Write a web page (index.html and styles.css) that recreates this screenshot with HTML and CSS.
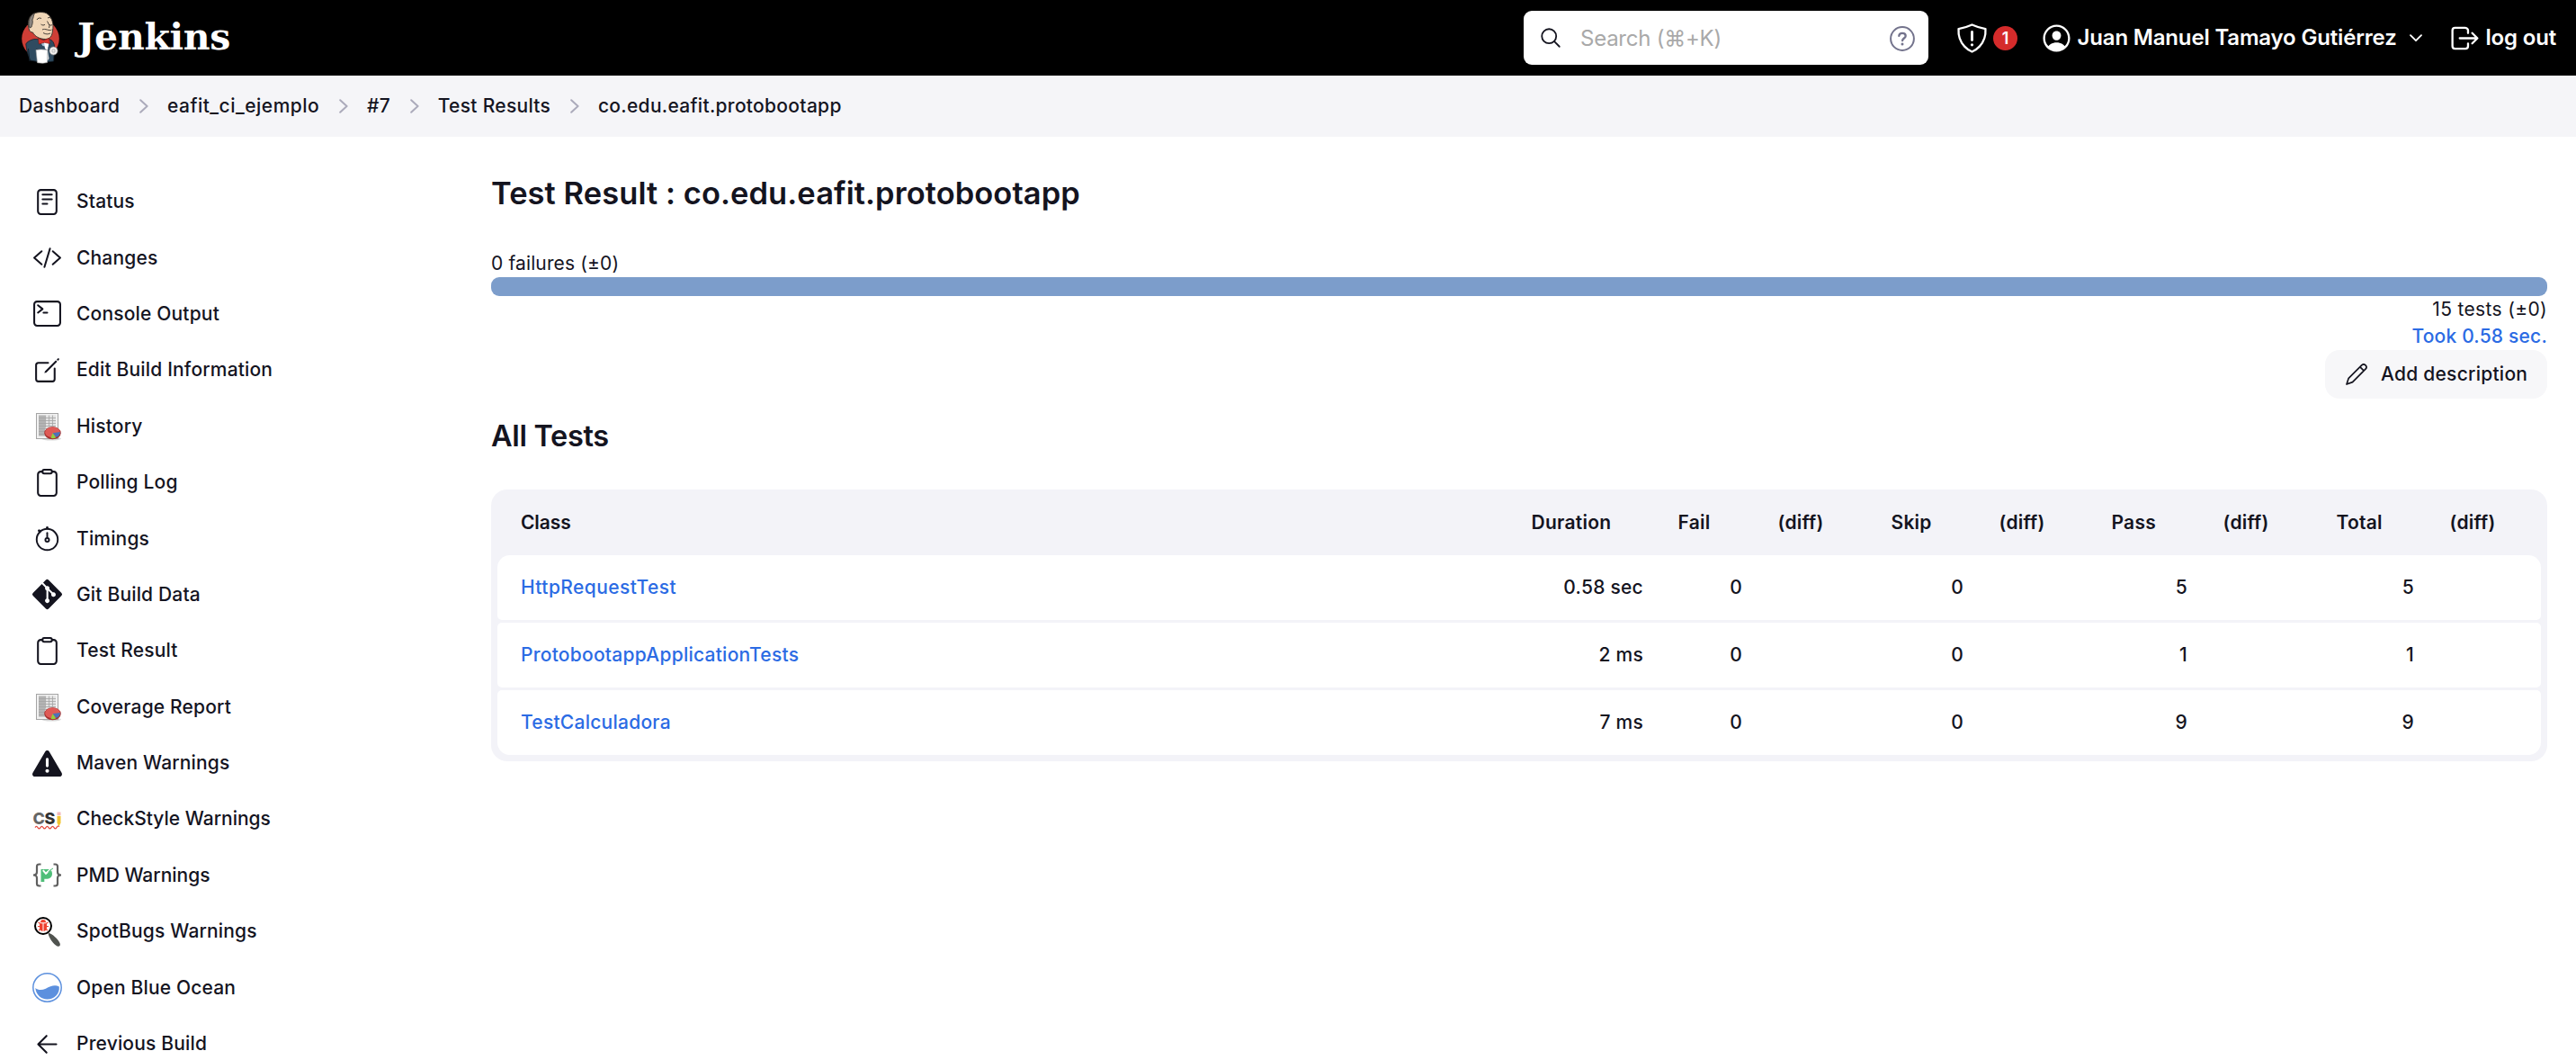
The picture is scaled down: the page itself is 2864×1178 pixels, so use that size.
FILE: index.html
```html
<!DOCTYPE html>
<html lang="en">
<head>
<meta charset="utf-8">
<title>Test Result : co.edu.eafit.protobootapp - Jenkins</title>
<link rel="stylesheet" href="styles.css">
</head>
<body>
<svg class="sprite" aria-hidden="true">
  <symbol id="chevron" viewBox="0 0 10 16"><path d="M1.2 1.2 8.6 8l-7.4 6.8" fill="none" stroke="#abaabb" stroke-width="2" stroke-linecap="round" stroke-linejoin="round"/></symbol>
  <symbol id="clipboard" viewBox="0 0 512 512"><g fill="none" stroke="currentColor" stroke-width="32" stroke-linejoin="round"><path d="M336 64h32a48 48 0 0148 48v320a48 48 0 01-48 48H144a48 48 0 01-48-48V112a48 48 0 0148-48h32"/><rect x="176" y="32" width="160" height="64" rx="26"/></g></symbol>
  <symbol id="report" viewBox="0 0 33 33">
    <ellipse cx="21" cy="30.500" rx="11" ry="2" fill="#d9d9d9"/>
    <rect x="4.500" y="2.500" width="24" height="28" fill="#f1f1f1" stroke="#a5a5a5"/>
    <rect x="7" y="4.500" width="19" height="23" fill="#e2e2e2"/>
    <rect x="7" y="4.500" width="7" height="23" fill="#b4b4b4"/>
    <path d="M7 7.500h19M7 10.500h19M7 13.500h19M7 16.500h19M7 19.500h12M7 22.500h8M7 25.500h8M14.500 4.500v14M18.500 4.500v13M22.500 4.500v12" stroke="#a3a3a3" stroke-width=".8" fill="none"/>
    <ellipse cx="22.500" cy="24.200" rx="9.200" ry="7" fill="#a52e2c"/>
    <ellipse cx="22.500" cy="23.400" rx="8.400" ry="5.900" fill="#df5a56"/>
    <path d="M22.500 24.200l8.300-1.300c.3 3-1.500 4.800-4.200 6z" fill="#4b72b8"/>
    <path d="M22.500 24.200l3.700 5.300c-2 .8-4.200.8-5.700.3z" fill="#8fd03f"/>
  </symbol>
</svg>

<header class="header">
  <a class="brand" href="#">
    <svg class="mascot" viewBox="0 0 60 72">
      <circle cx="29" cy="37" r="20.800" fill="#cf3e36"/>
      <path d="M12.800 43c1-2.500 5-4.500 9-5.500l18 .5c3 1 4.500 4 4.800 8l-1 16-12 1.500-14-2.500c-2-5-4.500-12-4.800-18z" fill="#2f4b60" stroke="#14222d" stroke-width=".8"/>
      <path d="M17 62l-1.500-14M24 49l14 1" stroke="#14222d" stroke-width="1" fill="none"/>
      <path d="M27.500 39h12l-2 7-6-1z" fill="#a9c6da"/><path d="M33 41h5l-1 9-3-2z" fill="#fff"/>
      <path d="M16.500 27c-2-5-1.500-13 3-16.500 4-3.500 14-4.200 18-.5 4.500 4 6.500 11 5 18-.5 6-3 9.500-8 9.500-6 0-12-3-14-7.500-2 0-3.500-1-4-3z" fill="#f0d6b7" stroke="#35302b" stroke-width=".9"/>
      <path d="M17 25c-2.500-6-.5-13.500 5.500-16.500-1.500 3-1 5-2.500 7.500 1 3-.5 6-1 8z" fill="#8b8580" stroke="#35302b" stroke-width=".8"/>
      <path d="M25 16c1-2 3-2.500 5-1.500M37 14c1.500-1 3-.5 3.500.5M29.500 21c1.500 1.300 3.500 1.300 4.500.2M39 21.500c1 .8 2 .8 3 0M36.500 17.500l2.500 5-.5 2.500M31 27c3-2 8 2 10.500 0M32 30.500c3 2 6 1.500 8 .5" stroke="#35302b" stroke-width=".9" fill="none"/>
      <path d="M26.500 36.500l6 2.200 6-2.200 1 6-6-1.200-6.300 1.700z" fill="#d8352e" stroke="#7a1612" stroke-width=".6"/>
      <circle cx="43.500" cy="50.500" r="4.600" fill="#f3f1f0" stroke="#777" stroke-width=".7"/><path d="M42 49h3v3h-3z" fill="none" stroke="#999" stroke-width=".6"/>
      <path d="M24 49.500c4-1 9-.5 13 0l-.5 14-5 .8-6-.6z" fill="#fff" stroke="#aaa" stroke-width=".6"/><path d="M37 51l1.500 8-2 3z" fill="#ddd"/>
    </svg>
    <span class="wordmark">Jenkins</span>
  </a>
  <div class="search">
    <svg class="search-icon" viewBox="0 0 512 512"><g fill="none" stroke="#14141f" stroke-width="36" stroke-linecap="round"><circle cx="221" cy="221" r="157"/><path d="M338 338l110 110"/></g></svg>
    <span class="placeholder">Search (⌘+K)</span>
    <svg class="help-icon" viewBox="0 0 28 28"><circle cx="14" cy="14" r="12.900" fill="none" stroke="#73738c" stroke-width="2"/><path d="M10.300 10.800c.2-1.800 1.700-2.900 3.700-2.900 2.100 0 3.700 1.200 3.700 3 0 2.500-3.600 2.700-3.600 5.300" fill="none" stroke="#73738c" stroke-width="2.300" stroke-linecap="round"/><circle cx="14" cy="20" r="1.500" fill="#73738c"/></svg>
  </div>
  <a class="security" href="#">
    <svg class="hicon" viewBox="0 0 512 512"><path d="M463.100 112.370C373.680 96.330 336.710 84.450 256 48c-80.710 36.450-117.680 48.330-207.100 64.370C32.700 369.130 240.580 457.790 256 464c15.420-6.210 223.300-94.870 207.100-351.630z" fill="none" stroke="#fff" stroke-width="32" stroke-linejoin="round"/><path d="M256 160v125" stroke="#fff" stroke-width="40" stroke-linecap="round"/><circle cx="256" cy="357" r="22" fill="#fff"/></svg>
    <span class="badge">1</span>
  </a>
  <a class="user" href="#">
    <svg class="hicon" viewBox="0 0 512 512"><path fill="#fff" d="M258.900 48C141.920 46.420 46.420 141.920 48 258.900c1.560 112.190 92.910 203.540 205.100 205.100 117 1.600 212.480-93.900 210.880-210.880C462.440 140.910 371.090 49.560 258.900 48zM385.320 375.250a4 4 0 01-6.140-.32 124.270 124.270 0 00-32.350-29.590C321.370 329 289.110 320 256 320s-65.370 9-90.830 25.340a124.240 124.240 0 00-32.350 29.580 4 4 0 01-6.140.32A175.320 175.320 0 0180 259c-1.630-97.310 78.220-178.760 175.570-179S432 158.810 432 256a175.320 175.320 0 01-46.680 119.250z"/><path fill="#fff" d="M256 144c-19.720 0-37.550 7.390-50.220 20.820s-19 32-17.570 51.930C191.110 256 221.520 288 256 288s64.830-32 67.790-71.240c1.480-19.740-4.800-38.140-17.680-51.820C293.390 151.440 275.590 144 256 144z"/></svg>
    <span class="hname">Juan Manuel Tamayo Gutiérrez</span>
    <svg class="caret" viewBox="0 0 14 9"><path d="M1 1.200l6 6 6-6" fill="none" stroke="#fff" stroke-width="1.800" stroke-linecap="round" stroke-linejoin="round"/></svg>
  </a>
  <a class="logout" href="#">
    <svg class="hicon" viewBox="0 0 512 512"><path d="M304 336v40a40 40 0 01-40 40H104a40 40 0 01-40-40V136a40 40 0 0140-40h152c22.090 0 48 17.910 48 40v40M368 336l80-80-80-80M176 256h256" fill="none" stroke="#fff" stroke-width="32" stroke-linecap="round" stroke-linejoin="round"/></svg>
    <span class="hname">log out</span>
  </a>
</header>

<nav class="crumbs">
  <a href="#">Dashboard</a><svg><use href="#chevron"/></svg>
  <a href="#" class="wide">eafit_ci_ejemplo</a><svg><use href="#chevron"/></svg>
  <a href="#">#7</a><svg><use href="#chevron"/></svg>
  <a href="#">Test Results</a><svg><use href="#chevron"/></svg>
  <a href="#">co.edu.eafit.protobootapp</a>
</nav>

<div class="page">
  <aside class="side">
    <a href="#"><svg viewBox="0 0 512 512"><g fill="none" stroke="currentColor" stroke-width="32" stroke-linecap="round" stroke-linejoin="round"><rect x="96" y="48" width="320" height="416" rx="48"/><path d="M176 128h160M176 208h160M176 288h80"/></g></svg>Status</a>
    <a href="#"><svg viewBox="0 0 512 512"><path d="M160 368L32 256l128-112M352 368l128-112-128-112M304 96l-96 320" fill="none" stroke="currentColor" stroke-width="32" stroke-linecap="round" stroke-linejoin="round"/></svg>Changes</a>
    <a href="#"><svg viewBox="0 0 512 512"><g fill="none" stroke="currentColor" stroke-width="32" stroke-linecap="round" stroke-linejoin="round"><rect x="32" y="48" width="448" height="416" rx="48"/><path d="M96 112l80 64-80 64M192 240h64"/></g></svg>Console Output</a>
    <a href="#"><svg viewBox="0 0 512 512"><path d="M384 224v184a40 40 0 01-40 40H104a40 40 0 01-40-40V168a40 40 0 0140-40h167.480" fill="none" stroke="currentColor" stroke-width="32" stroke-linecap="round" stroke-linejoin="round"/><path fill="currentColor" d="M459.940 53.250a16.060 16.060 0 00-23.220-.56L424.350 65a8 8 0 000 11.310l11.340 11.320a8 8 0 0011.340 0l12.060-12c6.100-6.090 6.670-16.010.85-22.380zM399.340 90L218.820 270.200a9 9 0 00-2.310 3.930L208.160 299a3.910 3.910 0 004.860 4.860l24.850-8.350a9 9 0 003.930-2.310L422 112.660a9 9 0 000-12.660l-9.950-10a9 9 0 00-12.710 0z"/></svg>Edit Build Information</a>
    <a href="#"><svg><use href="#report"/></svg>History</a>
    <a href="#"><svg><use href="#clipboard"/></svg>Polling Log</a>
    <a href="#"><svg viewBox="0 0 512 512"><g fill="none" stroke="currentColor" stroke-width="30" stroke-linecap="round"><circle cx="256" cy="272" r="182"/><circle cx="256" cy="280" r="32"/><path d="M256 240v-80"/><path d="M256 78V68M128 134l-12-12" stroke-width="44"/></g></svg>Timings</a>
    <a href="#"><svg viewBox="0 32 448 448"><path fill="currentColor" d="M439.550 236.050L244 40.450a28.870 28.870 0 0 0-40.810 0l-40.660 40.630 51.520 51.520c27.060-9.140 52.680 16.770 43.390 43.680l49.660 49.660c34.230-11.800 61.180 31 35.470 56.690-26.490 26.490-70.210-2.870-56-37.340L240.220 199v121.850c25.300 12.540 22.260 41.850 9.080 55a34.340 34.340 0 0 1-48.550 0c-17.570-17.600-11.070-46.910 11.250-56v-123c-20.800-8.510-24.600-30.740-18.640-45L142.570 101 8.450 235.140a28.860 28.860 0 0 0 0 40.810l195.610 195.600a28.860 28.860 0 0 0 40.800 0l194.690-194.690a28.860 28.860 0 0 0 0-40.810z"/></svg>Git Build Data</a>
    <a href="#"><svg><use href="#clipboard"/></svg>Test Result</a>
    <a href="#"><svg><use href="#report"/></svg>Coverage Report</a>
    <a href="#"><svg viewBox="0 0 512 512"><path fill="currentColor" d="M256 32c14.200 0 27.300 7.500 34.500 19.800l216 368c7.300 12.400 7.300 27.700.2 40.100S486.300 480 472 480H40c-14.300 0-27.600-7.700-34.700-20.100s-7-27.800.2-40.100l216-368C228.700 39.500 241.800 32 256 32zm0 128c-13.300 0-24 10.700-24 24V296c0 13.300 10.700 24 24 24s24-10.700 24-24V184c0-13.300-10.700-24-24-24zm32 224a32 32 0 1 0-64 0 32 32 0 1 0 64 0z"/></svg>Maven Warnings</a>
    <a href="#" class="tight"><svg viewBox="0 0 33 33"><text class="cs" x=".5" y="22"><tspan fill="#666">C</tspan><tspan fill="#303030">S</tspan></text><rect x="27.500" y="8.500" width="4" height="3.500" fill="#f2b8ba"/><path d="M27.500 12.700h4v7.800l-2 4-2-4z" fill="#f2c431"/><path d="M3 25.600q1.500-2.500 3 0t3 0 3 0 3 0 3 0 3 0 3 0 3 0 3-1" fill="none" stroke="#e5473a" stroke-width="1.100"/></svg>CheckStyle Warnings</a>
    <a href="#" class="tight"><svg viewBox="0 0 33 33"><path d="M9.500 4.500H7.500Q5 4.500 5 7v6q0 3.500-4 3.500 4 0 4 3.500v6q0 2.500 2.500 2.500h2M23.500 4.500h2Q28 4.500 28 7v6q0 3.500 4 3.500-4 0-4 3.500v6q0 2.500-2.500 2.500h-2" fill="none" stroke="#606060" stroke-width="2.200"/><path d="M9.500 10h7c4 0 5.500 2 5.500 5 0 3.800-2.500 5.800-7 5.800h-1.700V24H9.500z" fill="#4fbe79"/><path d="M11.800 11.200l3.200 3.600 4.800-4.300" fill="none" stroke="#fff" stroke-width="2"/><path d="M17.500 13.500q2-2.800 5.500-4.500" fill="none" stroke="#4fbe79" stroke-width="1"/></svg>PMD Warnings</a>
    <a href="#"><svg viewBox="0 0 33 33"><path d="M17.500 17.500c5 1.500 11 7 13 11.500 1.500 3.500-1.500 5-4.500 2.500C22 28.500 18 22.500 17.500 17.500z" fill="#50534f"/><circle cx="12" cy="10" r="9" fill="#fff" stroke="#000" stroke-width="2"/><path d="M6.500 6l2.500 1.500M6 10.500h3M7 15l2-1.500M17.500 6L15 7.500M18 10.500h-3M17 15l-2-1.500" stroke="#ee3f2e" stroke-width="1.200"/><path d="M9 6.300a3 3.200 0 016 0z" fill="#ee3f2e"/><path d="M8 7.300h3.500v8.600c-2.200-.3-3.500-2-3.500-4zM12.500 7.300H16v4.600c0 2-1.300 3.700-3.500 4z" fill="#ee3f2e"/></svg>SpotBugs Warnings</a>
    <a href="#"><svg viewBox="0 0 33 33"><circle cx="16.500" cy="16.500" r="15.700" fill="#fff" stroke="#5c90de" stroke-width="1.500"/><path d="M3.300 17c3 2.500 7 2.800 11.500.8 5.500-2.800 10-4.800 15-2.300.8 8-5.500 14-13.300 14-7 0-12.500-5.500-13.200-12.500z" fill="#5c90de"/></svg>Open Blue Ocean</a>
    <a href="#"><svg viewBox="0 0 512 512"><path d="M244 400L100 256l144-144M120 256h292" fill="none" stroke="currentColor" stroke-width="32" stroke-linecap="round" stroke-linejoin="round"/></svg>Previous Build</a>
  </aside>

  <main class="main">
    <h1>Test Result : co.edu.eafit.protobootapp</h1>
    <div class="failures">0 failures (±0)</div>
    <div class="bar"></div>
    <div class="summary">
      <div class="tests">15 tests (±0)</div>
      <a class="took" href="#">Took 0.58 sec.</a>
      <a class="button" href="#"><svg viewBox="0 0 24 24"><path d="M1 23l2.200-6.700L17.700 1.900a3 3 0 014.300 4.300L7.600 20.600zM16 3.800l4 4" fill="none" stroke="#14141f" stroke-width="1.700" stroke-linejoin="round"/></svg>Add description</a>
    </div>
    <h2>All Tests</h2>
    <div class="table-wrap">
      <table>
        <colgroup><col class="c1"><col class="c2"><col class="c3"><col class="c4"><col class="c5"><col class="c6"><col class="c7"><col class="c8"><col class="c9"><col class="c10"></colgroup>
        <thead><tr><th>Class</th><th>Duration</th><th>Fail</th><th>(diff)</th><th>Skip</th><th>(diff)</th><th>Pass</th><th>(diff)</th><th>Total</th><th>(diff)</th></tr></thead>
        <tbody>
          <tr><td><a class="wide" href="#">HttpRequestTest</a></td><td>0.58 sec</td><td>0</td><td></td><td>0</td><td></td><td>5</td><td></td><td>5</td><td></td></tr>
          <tr><td><a href="#">ProtobootappApplicationTests</a></td><td>2 ms</td><td>0</td><td></td><td>0</td><td></td><td>1</td><td></td><td>1</td><td></td></tr>
          <tr><td><a href="#">TestCalculadora</a></td><td>7 ms</td><td>0</td><td></td><td>0</td><td></td><td>9</td><td></td><td>9</td><td></td></tr>
        </tbody>
      </table>
    </div>
  </main>
</div>
</body>
</html>
```
FILE: styles.css
```css
* { box-sizing: border-box; }
body {
  margin: 0;
  height: 1178px;
  overflow: hidden;
  background: #fff;
  color: #14141f;
  font: 500 21px/30px Inter, "Noto Sans", sans-serif;
  letter-spacing: .25px;
}
a { color: inherit; text-decoration: none; }
.sprite { display: none; }

.header {
  display: flex;
  align-items: center;
  height: 84px;
  background: #000;
  color: #fff;
}
.brand { display: flex; align-items: center; padding-left: 16px; margin-right: auto; }
.mascot { width: 60px; height: 72px; }
.wordmark {
  margin: -3px 0 0 10px;
  font: bold 41px/50px "DejaVu Serif", serif;
  letter-spacing: -.3px;
}
.search {
  display: flex;
  align-items: center;
  width: 450px;
  height: 60px;
  margin-right: 30px;
  padding: 0 15px 0 17px;
  border-radius: 9px;
  background: #fff;
}
.search-icon { width: 26px; height: 26px; }
.placeholder {
  flex: 1;
  margin-left: 20px;
  padding-top: 1px;
  color: #a9a9a9;
  font-size: 24px;
  font-weight: 400;
  letter-spacing: -.25px;
}
.help-icon { width: 28px; height: 28px; margin-top: 2px; }
.hicon { flex: none; width: 37px; height: 37px; }
.security, .user, .logout { display: flex; align-items: center; }
.security { width: 93.5px; }
.badge {
  width: 27px;
  height: 27px;
  margin-left: 5px;
  border-radius: 50%;
  background: #d52b2b;
  font-size: 18px;
  font-weight: 600;
  line-height: 27px;
  letter-spacing: 0;
  text-align: center;
}
.user { width: 454px; }
.hname {
  margin-left: 5px;
  font-size: 24px;
  font-weight: 600;
  letter-spacing: -.17px;
  white-space: nowrap;
}
.caret { width: 14px; height: 9px; margin-left: 14px; }
.logout { width: 142.5px; }

.crumbs {
  display: flex;
  align-items: center;
  height: 68px;
  padding-left: 21px;
  background: #f5f5f8;
  letter-spacing: .3px;
}
.crumbs .wide { letter-spacing: .5px; }
.crumbs svg { width: 10px; height: 16px; margin: 0 20.500px 0 22.200px; }

.page { display: flex; }
.side {
  width: 546px;
  padding: 41px 0 0 36px;
  letter-spacing: .17px;
}
.side a { display: flex; align-items: center; height: 62.400px; }
.side .tight { letter-spacing: 0; }
.side svg { width: 33px; height: 33px; margin: 0 16px 0 0; overflow: visible; }
.cs { font: 800 18px Inter, sans-serif; letter-spacing: -.5px; }

.main { flex: 1; padding: 38px 32px 0 0; }
h1, h2 { margin: 0; font-weight: 600; }
h1 { font-size: 34.500px; line-height: 50px; letter-spacing: .06px; }
.failures { margin: 38px 0 0; font-weight: 400; letter-spacing: .13px; }
.bar { height: 21px; border-radius: 9px; background: #7c9dcb; }
.summary { display: flex; flex-direction: column; align-items: flex-end; }
.tests { font-weight: 400; letter-spacing: .34px; }
.took { color: #2b6be4; letter-spacing: .2px; }
.button {
  display: flex;
  align-items: center;
  width: 247px;
  height: 54px;
  padding: 0 0 1px 23px;
  border-radius: 16px;
  background: #f7f7f9;
}
.button svg { width: 24px; height: 24px; margin-right: 15px; }
h2 { margin: 22px 0 39px; font-size: 32.500px; line-height: 40px; letter-spacing: -.35px; }

.table-wrap { padding: 0 7px 4px; border-radius: 18px; background: #f3f3f8; }
table { width: 100%; table-layout: fixed; border-collapse: separate; border-spacing: 0 3px; }
th, td { padding: 0 13px 0 26.500px; text-align: left; white-space: nowrap; }
th { height: 67px; font-weight: 600; }
th:first-child { padding-left: 26px; letter-spacing: -.1px; }
td { height: 72px; padding-bottom: 1px; background: #fff; text-align: right; }
td:first-child { padding-left: 26px; text-align: left; border-radius: 5px 0 0 5px; }
td:nth-child(2) { padding-right: 12px; }
td:last-child { border-radius: 0 5px 5px 0; }
tbody tr:first-child td:first-child { border-top-left-radius: 14px; }
tbody tr:first-child td:last-child { border-top-right-radius: 14px; }
tbody tr:last-child td:first-child { border-bottom-left-radius: 14px; }
tbody tr:last-child td:last-child { border-bottom-right-radius: 14px; }
td a { color: #2b6be4; }
td .wide { letter-spacing: .42px; }
.c1 { width: 1123px; }
.c2 { width: 163px; }
.c3 { width: 111px; }
.c4 { width: 126px; }
.c5 { width: 120px; }
.c6 { width: 125px; }
.c7 { width: 124px; }
.c8 { width: 126px; }
.c9 { width: 126px; }
.c10 { width: 128px; }
```
